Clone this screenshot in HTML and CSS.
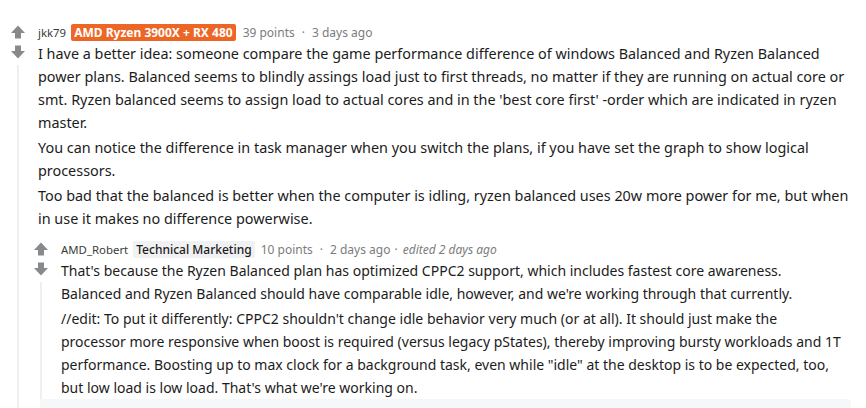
FILE: index.html
```html
<!DOCTYPE html>
<html>
<head>
<meta charset="utf-8">
<link rel="stylesheet" href="styles.css">
</head>
<body>
<div class="page">
  <div class="comment">
    <div class="rail">
      <svg class="arrow" viewBox="0 0 16 16"><path d="M8 1.5 L15 9 H11 V14.5 H5 V9 H1 Z"/></svg>
      <svg class="arrow" viewBox="0 0 16 16"><path d="M8 14.5 L15 7 H11 V1.5 H5 V7 H1 Z"/></svg>
      <div class="line"></div>
    </div>
    <div class="meta">
      <span class="user">jkk79</span>
      <span class="flair orange">AMD Ryzen 3900X + RX 480</span>
      <span class="muted">39 points</span>
      <span class="dot">·</span>
      <span class="muted">3 days ago</span>
    </div>
    <div class="body">
      <p>I have a better idea: someone compare the game performance difference of windows Balanced and Ryzen Balanced power plans. Balanced seems to blindly assings load just to first threads, no matter if they are running on actual core or smt. Ryzen balanced seems to assign load to actual cores and in the 'best core first' -order which are indicated in ryzen master.</p>
      <p>You can notice the difference in task manager when you switch the plans, if you have set the graph to show logical processors.</p>
      <p>Too bad that the balanced is better when the computer is idling, ryzen balanced uses 20w more power for me, but when in use it makes no difference powerwise.</p>
    </div>
    <div class="children">
      <div class="comment">
        <div class="rail">
          <svg class="arrow" viewBox="0 0 16 16"><path d="M8 1.5 L15 9 H11 V14.5 H5 V9 H1 Z"/></svg>
          <svg class="arrow" viewBox="0 0 16 16"><path d="M8 14.5 L15 7 H11 V1.5 H5 V7 H1 Z"/></svg>
          <div class="line"></div>
        </div>
        <div class="meta">
          <span class="user">AMD_Robert</span>
          <span class="flair grey">Technical Marketing</span>
          <span class="muted">10 points</span>
          <span class="dot">·</span>
          <span class="muted">2 days ago</span>
          <span class="muted edited"><span class="dot">·</span> edited 2 days ago</span>
        </div>
        <div class="body small">
          <p>That's because the Ryzen Balanced plan has optimized CPPC2 support, which includes fastest core awareness.<br>Balanced and Ryzen Balanced should have comparable idle, however, and we're working through that currently.</p>
          <p>//edit: To put it differently: CPPC2 shouldn't change idle behavior very much (or at all). It should just make the processor more responsive when boost is required (versus legacy pStates), thereby improving bursty workloads and 1T performance. Boosting up to max clock for a background task, even while "idle" at the desktop is to be expected, too, but low load is low load. That's what we're working on.</p>
        </div>
        <div class="more"></div>
      </div>
    </div>
  </div>
</div>
</body>
</html>
```
FILE: styles.css
```css
html, body {
  margin: 0;
  padding: 0;
  background: #ffffff;
}
.page {
  padding: 22px 15px 0 0;
  font-family: "Noto Sans", "Open Sans", sans-serif;
  color: #1c1c1c;
}
.comment {
  display: grid;
  grid-template-columns: 23px 15px 1fr;
  grid-template-rows: auto auto auto;
}
.rail {
  grid-column: 1 / 3;
  grid-row: 1 / 5;
  display: flex;
  flex-direction: column;
  align-items: center;
  padding: 0 2px 0 0;
}
.arrow {
  width: 16px;
  height: 16px;
  fill: #878a8c;
  margin-top: 2px;
}
.arrow + .arrow {
  margin-top: 4px;
}
.line {
  flex: 1;
  width: 2px;
  background: #edeff1;
  margin-top: 5px;
}
.meta {
  grid-column: 3;
  grid-row: 1;
  display: flex;
  align-items: center;
  height: 20px;
  font-size: 12px;
  color: #7c7c7c;
  gap: 4px;
}
.user {
  color: #3a3a3a;
  font-size: 11.4px;
  margin-right: 1px;
}
.flair {
  font-weight: bold;
  padding: 0 3px;
  border-radius: 2px;
  line-height: 17px;
  margin: 0 3px 0 0;
}
.orange {
  background: #ee6625;
  color: #ffffff;
}
.grey {
  background: #f0f1f2;
  color: #1c1c1c;
  font-weight: 500;
  padding: 0 3px;
  margin-right: 2px;
}
.dot {
  margin: 0 3px;
}
.edited {
  font-style: italic;
}
.edited .dot {
  font-style: normal;
  margin: 0 2px 0 0;
}
.body {
  grid-column: 3;
  grid-row: 2;
  font-size: 14.4px;
  line-height: 23px;
}
.body.small {
  font-size: 14px;
  padding-right: 9px;
}
.body p {
  margin: 0 0 2px;
}
.body p:last-child {
  margin-bottom: 0;
}
.children {
  grid-column: 2 / 4;
  grid-row: 3;
  margin-top: 9px;
}
.more {
  grid-column: 1 / 4;
  grid-row: 3;
  margin: 0 0 0 17px;
  height: 20px;
  background: #f6f7f8;
  border-radius: 0 4px 0 0;
}
```
